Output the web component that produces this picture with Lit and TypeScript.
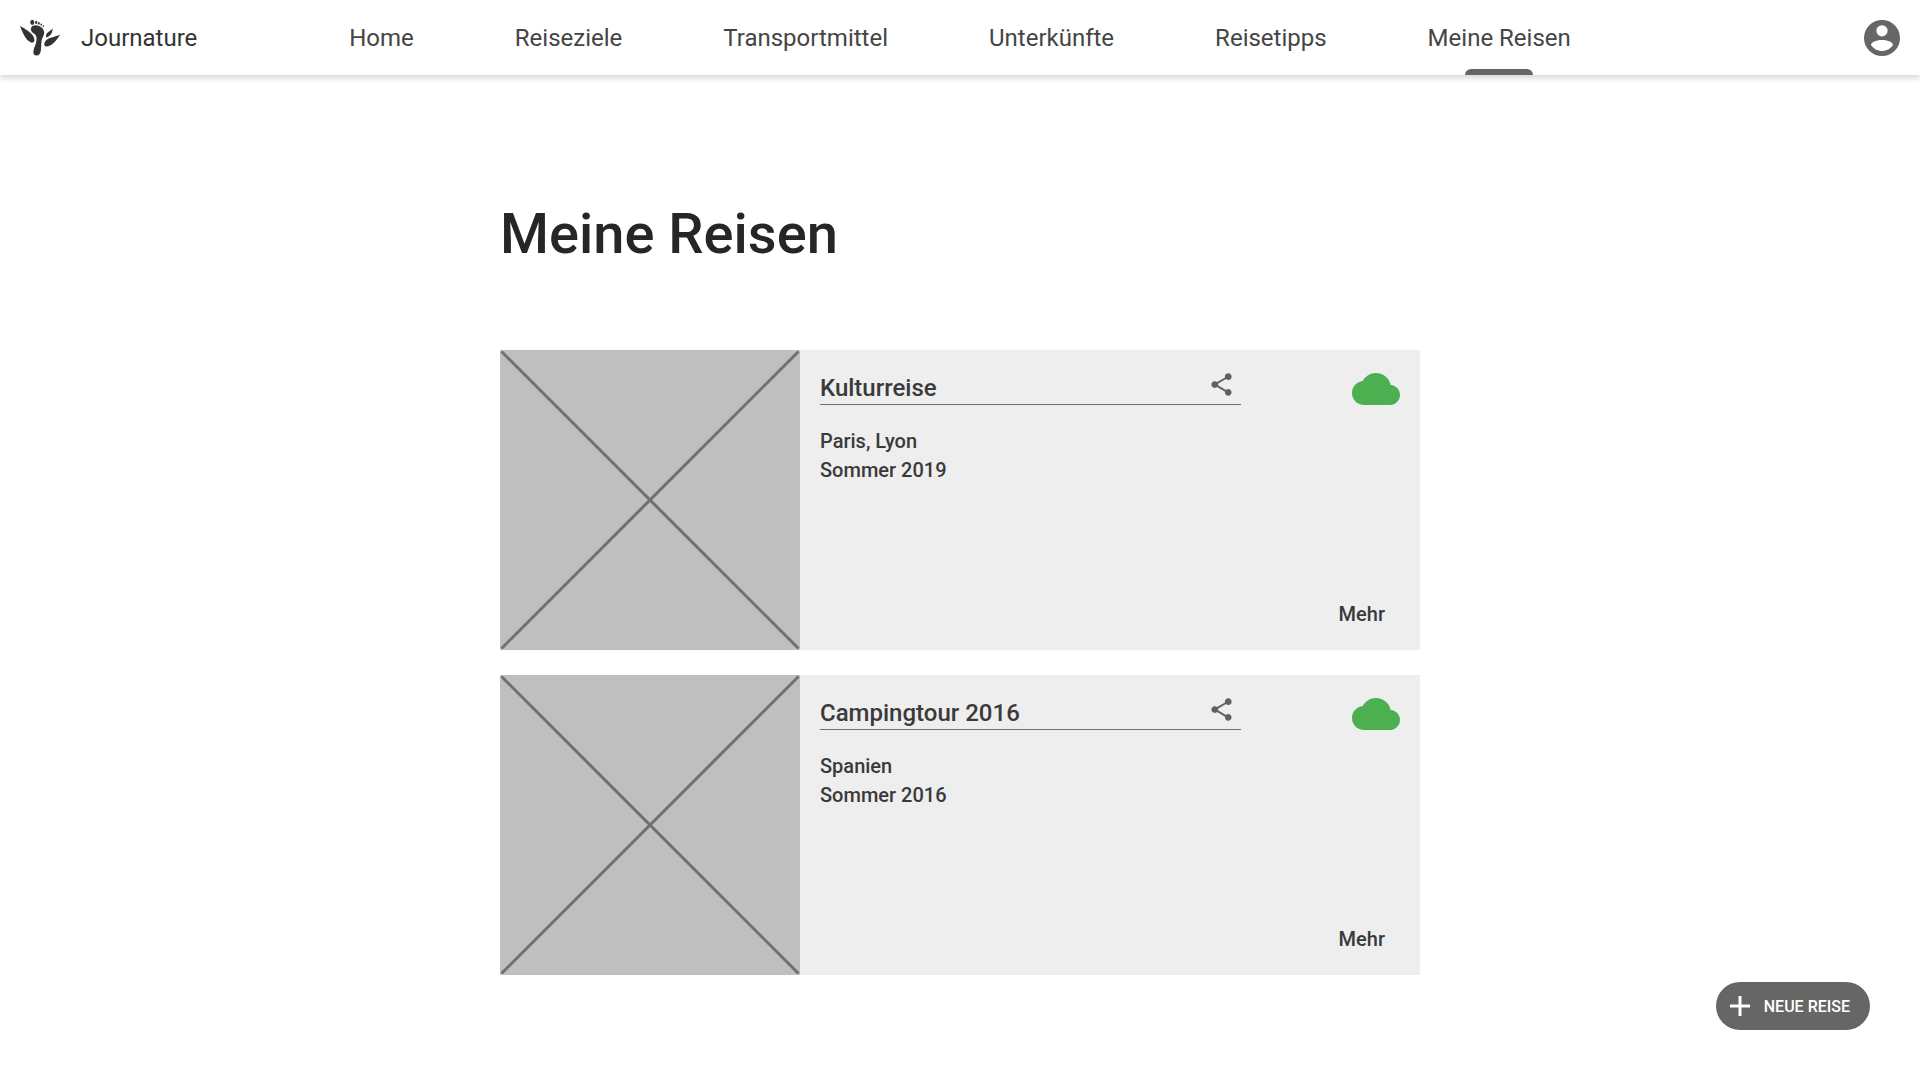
import { LitElement, html, css, svg, nothing } from "lit";
import { customElement, property } from "lit/decorators.js";

interface Trip {
  title: string;
  places: string;
  season: string;
}

const NAV_ITEMS = ["Home", "Reiseziele", "Transportmittel", "Unterkünfte", "Reisetipps", "Meine Reisen"];

const TRIPS: Trip[] = [
  { title: "Kulturreise", places: "Paris, Lyon", season: "Sommer 2019" },
  { title: "Campingtour 2016", places: "Spanien", season: "Sommer 2016" },
];

const footprint = svg`
  <ellipse cx="97" cy="67.5" rx="6" ry="8"/>
  <ellipse cx="109" cy="68" rx="3.4" ry="5"/>
  <ellipse cx="117" cy="70.5" rx="2.8" ry="4.2" transform="rotate(12 117 70.5)"/>
  <ellipse cx="124.5" cy="74.5" rx="2.4" ry="3.6" transform="rotate(18 124.5 74.5)"/>
  <ellipse cx="131" cy="79" rx="2" ry="3" transform="rotate(24 131 79)"/>
  <path d="M93 87C94 79 102 76 111 77C123 79 133 87 133 98C133 107 127.500 113 125.500 122C123.500 133 125 145 122.500 156C120.500 164 117 168 110.500 168C103 168 99.500 163 100.500 155C102 144 109 134 110 121C111 111 108.500 106 103 102C97 98 92 94 93 87Z"/>
  <path d="M60 79C73 86 87 95 94 102C100 108 101 110 103 117C105 124 102 128 98 129C92 130 84 124 78 116C70 105 66 94 60 79Z"/>
  <path d="M159 86C158 95 156 102 151 107C146 112 141 114 139 112C138 108 139 103 143 99C148 94 154 91 159 86Z"/>
  <path d="M181.500 105C174 117 165 128 156 135C147 142 137 142 134 138C132 133 135 125 141 120C149 114 166 111 181.500 105Z"/>`;

@customElement("app-header")
class AppHeader extends LitElement {
  @property() active = "";

  static styles = css`
    :host {
      display: block;
    }
    .bar {
      display: grid;
      grid-template-columns: 1fr auto 1fr;
      align-items: center;
      min-height: 75px;
      padding: 0 20px;
      background: #fff;
      box-shadow: 0 3px 6px rgba(0, 0, 0, 0.16);
    }
    .brand {
      display: flex;
      align-items: center;
      gap: 21px;
      color: #333;
      font-size: 24px;
      text-decoration: none;
    }
    .logo {
      width: 40px;
      height: 37px;
      fill: #333;
    }
    .nav {
      display: flex;
      align-self: stretch;
    }
    .links {
      display: flex;
      gap: 101px;
      margin: 0;
      padding: 0;
      list-style: none;
    }
    .item {
      display: flex;
    }
    .link {
      position: relative;
      display: flex;
      align-items: center;
      color: #454545;
      font-size: 24px;
      text-decoration: none;
      white-space: nowrap;
    }
    .link[aria-current]::after {
      content: "";
      position: absolute;
      bottom: 0;
      left: 50%;
      width: 68px;
      height: 6px;
      margin-left: -34px;
      border-radius: 6px 6px 0 0;
      background: #666;
    }
    .account {
      display: flex;
      justify-self: end;
      padding: 0;
      border: 0;
      background: none;
      cursor: pointer;
    }
    .avatar {
      width: 36px;
      height: 36px;
      fill: #666;
    }
  `;

  render() {
    return html`
      <header class="bar">
        <a class="brand" href="#home">
          <svg class="logo" viewBox="60 58 121 111" aria-hidden="true">${footprint}</svg>
          <span>Journature</span>
        </a>
        <nav class="nav">
          <ul class="links">
            ${NAV_ITEMS.map(
              (label) => html`<li class="item">
                <a class="link" href="#" aria-current=${label === this.active ? "page" : nothing}>${label}</a>
              </li>`
            )}
          </ul>
        </nav>
        <button class="account" type="button" aria-label="Konto">
          <svg class="avatar" viewBox="0 0 36 36" aria-hidden="true">
            <path fill-rule="evenodd" d="M18 0a18 18 0 1 0 0 36a18 18 0 1 0 0-36ZM18 5.200a5.600 5.600 0 1 1 0 11.200a5.600 5.600 0 1 1 0-11.200ZM18 20C24.500 20 29 22.500 29 25C26.500 28.800 22.500 31 18 31C13.500 31 9.500 28.800 7 25C7 22.500 11.500 20 18 20Z"/>
          </svg>
        </button>
      </header>
    `;
  }
}

@customElement("trip-card")
class TripCard extends LitElement {
  @property({ attribute: false }) trip!: Trip;

  static styles = css`
    :host {
      display: block;
    }
    .card {
      display: grid;
      grid-template-columns: 300px 1fr;
      background: #eee;
      color: #3a3a3a;
    }
    .picture {
      display: block;
      width: 100%;
      aspect-ratio: 1;
      background: #bfbfbf;
      stroke: #707070;
      stroke-width: 3;
    }
    .body {
      display: flex;
      flex-direction: column;
      padding: 15px 20px;
    }
    .top {
      display: flex;
      align-items: flex-start;
      gap: 111px;
    }
    .heading {
      display: flex;
      flex: 1;
      align-items: center;
      justify-content: space-between;
      box-sizing: border-box;
      height: 40px;
      padding-right: 6px;
      border-bottom: 1px solid #707070;
    }
    .title {
      margin: 0;
      padding-top: 6px;
      font-size: 24px;
      font-weight: 500;
      line-height: 28px;
    }
    .share {
      display: flex;
      padding: 0;
      border: 0;
      background: none;
      cursor: pointer;
    }
    .share-icon {
      width: 27px;
      height: 27px;
      fill: #606060;
    }
    .cloud {
      width: 48px;
      height: 48px;
      fill: #4caf50;
    }
    .details {
      margin: 14px 0 0;
      font-size: 20px;
      font-weight: 500;
      line-height: 29px;
    }
    .more {
      align-self: flex-end;
      margin: auto 15px 7px 0;
      color: inherit;
      font-size: 20px;
      font-weight: 500;
      line-height: 28px;
      text-decoration: none;
    }
  `;

  render() {
    const { title, places, season } = this.trip;
    return html`
      <article class="card">
        <svg class="picture" viewBox="0 0 300 300" role="img" aria-label="Platzhalter">
          <path d="M1.500 1.500L298.500 298.500M298.500 1.500L1.500 298.500" />
        </svg>
        <div class="body">
          <div class="top">
            <div class="heading">
              <h2 class="title">${title}</h2>
              <button class="share" type="button" aria-label="Teilen">
                <svg class="share-icon" viewBox="0 0 24 24" aria-hidden="true">
                  <path d="M18 16.080c-.76 0-1.440.3-1.960.77L8.910 12.700c.05-.23.09-.46.09-.7s-.04-.47-.09-.7l7.050-4.110c.54.5 1.250.81 2.040.81 1.660 0 3-1.340 3-3s-1.340-3-3-3-3 1.340-3 3c0 .24.04.47.09.7L8.040 9.810C7.500 9.310 6.790 9 6 9c-1.660 0-3 1.340-3 3s1.340 3 3 3c.79 0 1.500-.31 2.040-.81l7.120 4.160c-.05.21-.08.43-.08.650 0 1.610 1.310 2.920 2.920 2.920s2.920-1.310 2.920-2.920-1.310-2.920-2.920-2.920z" />
                </svg>
              </button>
            </div>
            <svg class="cloud" viewBox="0 0 24 24" aria-hidden="true">
              <path d="M19.350 10.040C18.670 6.590 15.640 4 12 4 9.110 4 6.600 5.640 5.350 8.040 2.340 8.360 0 10.910 0 14c0 3.310 2.690 6 6 6h13c2.760 0 5-2.240 5-5 0-2.640-2.050-4.780-4.650-4.960z" />
            </svg>
          </div>
          <p class="details">${places}<br />${season}</p>
          <a class="more" href="#">Mehr</a>
        </div>
      </article>
    `;
  }
}

@customElement("app-root")
class AppRoot extends LitElement {
  static styles = css`
    :host {
      display: block;
      min-height: 100vh;
      background: #fff;
      font-family: Roboto, "Liberation Sans", sans-serif;
    }
    .content {
      box-sizing: border-box;
      max-width: 960px;
      margin: 0 auto;
      padding: 126px 20px 105px;
    }
    .headline {
      margin: 0 0 83px;
      color: #262626;
      font-size: 56px;
      font-weight: 500;
      line-height: 66px;
    }
    .trips {
      display: grid;
      gap: 25px;
    }
    .create {
      position: fixed;
      right: 50px;
      bottom: 50px;
      display: flex;
      align-items: center;
      gap: 14px;
      height: 48px;
      padding: 0 20px 0 14px;
      border: 0;
      border-radius: 24px;
      background: #666;
      color: #fff;
      font-family: inherit;
      font-size: 16px;
      font-weight: 500;
      cursor: pointer;
    }
    .plus {
      width: 20px;
      height: 20px;
      stroke: #fff;
      stroke-width: 3;
    }
  `;

  render() {
    return html`
      <app-header active="Meine Reisen"></app-header>
      <main class="content">
        <h1 class="headline">Meine Reisen</h1>
        <div class="trips">${TRIPS.map((trip) => html`<trip-card .trip=${trip}></trip-card>`)}</div>
      </main>
      <button class="create" type="button">
        <svg class="plus" viewBox="0 0 20 20" aria-hidden="true"><path d="M10 0V20M0 10H20" /></svg>
        <span>NEUE REISE</span>
      </button>
    `;
  }
}
